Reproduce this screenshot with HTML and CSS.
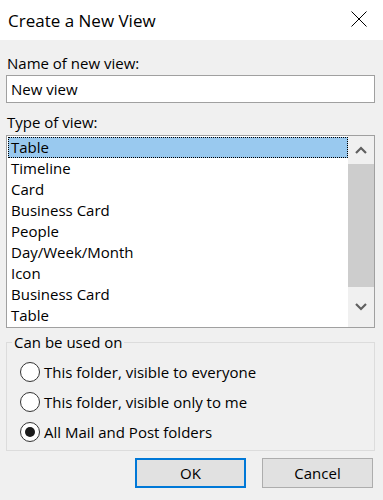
FILE: index.html
```html
<!DOCTYPE html>
<html>
<head>
<meta charset="utf-8">
<link rel="stylesheet" href="styles.css">
</head>
<body>
<div class="dialog">
  <div class="titlebar">
    <span class="title">Create a New View</span>
    <svg class="close" width="16" height="16" viewBox="0 0 16 16"><path d="M0.5 0.5L15.5 15.5M15.5 0.5L0.5 15.5" stroke="#000" stroke-width="1" fill="none"/></svg>
  </div>
  <div class="content">
    <div class="label name-label">Name of new view:</div>
    <div class="input">New view</div>
    <div class="label type-label">Type of view:</div>
    <div class="listbox">
      <div class="items">
        <div class="item selected">Table</div>
        <div class="item">Timeline</div>
        <div class="item">Card</div>
        <div class="item">Business Card</div>
        <div class="item">People</div>
        <div class="item">Day/Week/Month</div>
        <div class="item">Icon</div>
        <div class="item">Business Card</div>
        <div class="item">Table</div>
      </div>
      <div class="scrollbar">
        <div class="arrow up"><svg width="12" height="8" viewBox="0 0 12 8"><path d="M1 7L6 2L11 7" stroke="#606060" stroke-width="2.2" fill="none"/></svg></div>
        <div class="thumb"></div>
        <div class="arrow down"><svg width="12" height="8" viewBox="0 0 12 8"><path d="M1 1L6 6L11 1" stroke="#606060" stroke-width="2.2" fill="none"/></svg></div>
      </div>
    </div>
    <fieldset class="group">
      <legend>Can be used on</legend>
      <div class="radio"><span class="circle"></span>This folder, visible to everyone</div>
      <div class="radio"><span class="circle"></span>This folder, visible only to me</div>
      <div class="radio"><span class="circle checked"></span>All Mail and Post folders</div>
    </fieldset>
    <div class="buttons">
      <div class="btn default">OK</div>
      <div class="btn">Cancel</div>
    </div>
  </div>
</div>
</body>
</html>
```
FILE: styles.css
```css
html, body {
  margin: 0;
  padding: 0;
}
body {
  width: 383px;
  height: 500px;
  background: #f0f0f0;
  font-family: "Open Sans", "Noto Sans", sans-serif;
  font-size: 15px;
  color: #000;
  overflow: hidden;
}
.titlebar {
  height: 40px;
  background: #fff;
  display: flex;
  align-items: center;
  justify-content: space-between;
  padding: 0 16px 0 8px;
}
.title {
  font-size: 17px;
}
.close {
  display: block;
  margin-top: -2px;
}
.content {
  padding: 0 8px 0 6px;
}
.label {
  line-height: 20px;
  padding-left: 1px;
}
.name-label {
  margin-top: 13px;
}
.input {
  margin-top: 2px;
  height: 26px;
  border: 1px solid #a0a0a0;
  background: #fff;
  line-height: 26px;
  padding-left: 4px;
}
.type-label {
  margin-top: 9px;
}
.listbox {
  margin-top: 3px;
  height: 190px;
  border: 1px solid #a0a0a0;
  background: #fff;
  display: flex;
  padding: 1px 0 0 1px;
}
.items {
  flex: 1;
}
.item {
  height: 21px;
  line-height: 21px;
  padding-left: 3px;
}
.item.selected {
  background: #99c9ef;
  outline: 1px dotted #000;
  outline-offset: -1px;
}
.scrollbar {
  width: 26px;
  margin-top: -1px;
  background: #f0f0f0;
  display: flex;
  flex-direction: column;
}
.arrow {
  display: flex;
  align-items: center;
  justify-content: center;
}
.arrow.up {
  height: 28px;
}
.arrow.down {
  flex: 1;
}
.thumb {
  height: 123px;
  background: #cdcdcd;
}
.group {
  margin: 6px 0 0 0;
  border: 1px solid #dcdcdc;
  padding: 7px 0 0 13px;
  box-sizing: border-box;
  height: 117px;
}
.group legend {
  padding: 0 2px;
  margin-left: -8px;
  line-height: 16px;
}
.radio {
  display: flex;
  align-items: center;
  height: 30px;
  gap: 4px;
}
.circle {
  width: 18px;
  height: 18px;
  border: 1px solid #333;
  border-radius: 50%;
  background: #fff;
  box-sizing: content-box;
  position: relative;
}
.circle.checked::after {
  content: "";
  position: absolute;
  left: 4px;
  top: 4px;
  width: 10px;
  height: 10px;
  border-radius: 50%;
  background: #1a1a1a;
}
.buttons {
  display: flex;
  justify-content: flex-end;
  gap: 16px;
  margin-top: 7px;
  padding-right: 2px;
}
.btn {
  width: 109px;
  height: 28px;
  border: 1px solid #adadad;
  background: #e1e1e1;
  display: flex;
  align-items: center;
  justify-content: center;
}
.btn.default {
  border: 2px solid #0078d7;
  width: 107px;
  height: 26px;
}
```
